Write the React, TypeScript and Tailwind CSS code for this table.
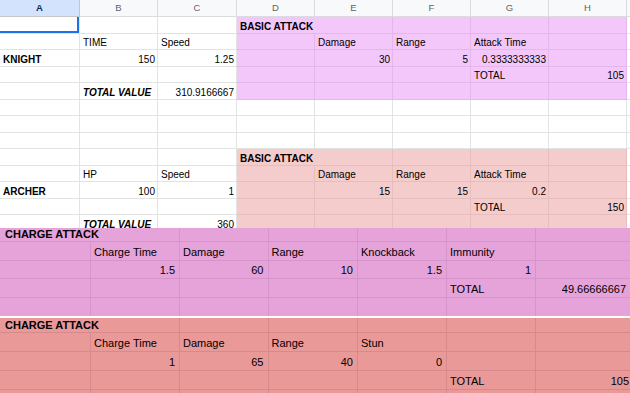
import React from "react";

type Cell = {
  v?: string;
  r?: boolean;
  b?: boolean;
  i?: boolean;
  span?: 2;
  bg?: "w" | "k" | "a";
};

const bgClass = {
  w: "bg-white border-[#e2e3e3]",
  k: "bg-[#f4c7fb] border-[#e4b7ec]",
  a: "bg-[#f4cccc] border-[#e6bebe]",
};

const cols = ["A", "B", "C", "D", "E", "F", "G", "H", ""];

// rows 1..13 of the sheet, 9 columns each (A..H + the sliver of I)
function row(cells: Cell[], tint?: "k" | "a"): Cell[] {
  const out: Cell[] = [];
  let c = 0;
  for (const cell of cells) {
    const inBlock = tint && c >= 3 && c <= 7;
    out.push({ ...cell, bg: cell.bg ?? (inBlock ? tint : "w") });
    c += cell.span ?? 1;
  }
  while (c < 9) {
    out.push({ bg: tint && c >= 3 && c <= 7 ? tint : "w" });
    c++;
  }
  return out;
}

const sheet: Cell[][] = [
  row([{}, {}, {}, { v: "BASIC ATTACK", b: true, span: 2 }], "k"),
  row([{}, { v: "TIME" }, { v: "Speed" }, {}, { v: "Damage" }, { v: "Range" }, { v: "Attack Time" }], "k"),
  row(
    [
      { v: "KNIGHT", b: true },
      { v: "150", r: true },
      { v: "1.25", r: true },
      {},
      { v: "30", r: true },
      { v: "5", r: true },
      { v: "0.3333333333", r: true },
    ],
    "k"
  ),
  row([{}, {}, {}, {}, {}, {}, { v: "TOTAL" }, { v: "105", r: true }], "k"),
  row([{}, { v: "TOTAL VALUE", b: true, i: true }, { v: "310.9166667", r: true }], "k"),
  row([]),
  row([]),
  row([]),
  row([{}, {}, {}, { v: "BASIC ATTACK", b: true, span: 2 }], "a"),
  row([{}, { v: "HP" }, { v: "Speed" }, {}, { v: "Damage" }, { v: "Range" }, { v: "Attack Time" }], "a"),
  row(
    [
      { v: "ARCHER", b: true },
      { v: "100", r: true },
      { v: "1", r: true },
      {},
      { v: "15", r: true },
      { v: "15", r: true },
      { v: "0.2", r: true },
    ],
    "a"
  ),
  row([{}, {}, {}, {}, {}, {}, { v: "TOTAL" }, { v: "150", r: true }], "a"),
  row([{}, { v: "TOTAL VALUE", b: true, i: true }, { v: "360", r: true }], "a"),
];

function SheetCell({ c, first }: { c: Cell; first?: boolean }) {
  return (
    <div
      className={`flex items-end pb-[1px] overflow-hidden whitespace-nowrap border-r border-b leading-none text-[10px] text-black ${
        bgClass[c.bg ?? "w"]
      } ${c.span === 2 ? "col-span-2" : ""} ${c.r ? "justify-end pr-[2px]" : "pl-[3px]"} ${
        c.b ? "font-bold" : ""
      } ${c.i ? "italic" : ""} ${first ? "shadow-[inset_-2px_-2px_0_#1a73e8]" : ""}`}
    >
      {c.v}
    </div>
  );
}

type ChargeCell = { v?: string; r?: boolean; b?: boolean; span?: 2 };

const purpleRows: ChargeCell[][] = [
  [{ v: "CHARGE ATTACK", b: true, span: 2 }, {}, {}, {}, {}, {}],
  [{}, { v: "Charge Time" }, { v: "Damage" }, { v: "Range" }, { v: "Knockback" }, { v: "Immunity" }, {}],
  [
    {},
    { v: "1.5", r: true },
    { v: "60", r: true },
    { v: "10", r: true },
    { v: "1.5", r: true },
    { v: "1", r: true },
    {},
  ],
  [{}, {}, {}, {}, {}, { v: "TOTAL" }, { v: "49.66666667", r: true }],
  [{}, {}, {}, {}, {}, {}, {}],
];

const redRows: ChargeCell[][] = [
  [{ v: "CHARGE ATTACK", b: true, span: 2 }, {}, {}, {}, {}, {}],
  [{}, { v: "Charge Time" }, { v: "Damage" }, { v: "Range" }, { v: "Stun" }, {}, {}],
  [{}, { v: "1", r: true }, { v: "65", r: true }, { v: "40", r: true }, { v: "0", r: true }, {}, {}],
  [{}, {}, {}, {}, {}, { v: "TOTAL" }, { v: "105", r: true }],
  [{}, {}, {}, {}, {}, {}, {}],
];

function ChargeBlock({ rows, red }: { rows: ChargeCell[][]; red?: boolean }) {
  return (
    <div
      className={`grid grid-cols-[91px_89px_88.5px_89.5px_89px_89px_1fr] overflow-hidden ${
        red
          ? "bg-[#ea9999] h-[75px] grid-rows-[15px_19px_19px_19px_19px]"
          : "bg-[#e6a3d9] h-[88px] grid-rows-[14px_18.5px_18.5px_18.5px_18.5px]"
      }`}
    >
      {rows.map((r, ri) =>
        r.map((c, ci) => {
          const last = ci === r.length - 1;
          return (
            <div
              key={`${ri}-${ci}`}
              className={`flex items-center overflow-hidden whitespace-nowrap leading-none text-[11px] text-black ${
                ri > 0 ? "pt-[3px]" : ""
              } ${red ? "border-[#d68a8c]" : "border-[#d595ca]"} ${last ? "" : "border-r"} ${
                ri < rows.length - 1 ? "border-b" : ""
              } ${c.span === 2 ? "col-span-2 pl-[5px]" : ""} ${
                c.r ? (last && red ? "justify-end pr-[1px]" : "justify-end pr-[4px]") : c.span ? "" : "pl-[3px]"
              } ${c.b ? "font-bold" : ""}`}
            >
              {c.v}
            </div>
          );
        })
      )}
    </div>
  );
}

export default function App() {
  return (
    <div
      className="w-[630px] h-[393px] overflow-hidden bg-white"
      style={{ fontFamily: '"Liberation Sans", Arial, sans-serif' }}
    >
      <div className="h-[228px] overflow-hidden">
        <div className="grid grid-cols-[80px_78px_79px_78px_78px_78px_78px_78px_1fr] grid-rows-[17px] auto-rows-[16.5px]">
          {cols.map((l, i) => (
            <div
              key={l + i}
              className={`flex items-center justify-center text-[9.5px] leading-none border-r border-b ${
                i === 0
                  ? "bg-[#d3e3fd] text-[#0b2e5c] font-bold border-[#c4c7c5]"
                  : "bg-[#f8f9fa] text-[#5f6368] border-[#dadce0]"
              }`}
            >
              {l}
            </div>
          ))}
          {sheet.map((r, ri) => r.map((c, ci) => <SheetCell key={`${ri}-${ci}`} c={c} first={ri === 0 && ci === 0} />))}
        </div>
      </div>
      <ChargeBlock rows={purpleRows} />
      <div className="h-[2px] bg-white" />
      <ChargeBlock rows={redRows} red />
    </div>
  );
}
